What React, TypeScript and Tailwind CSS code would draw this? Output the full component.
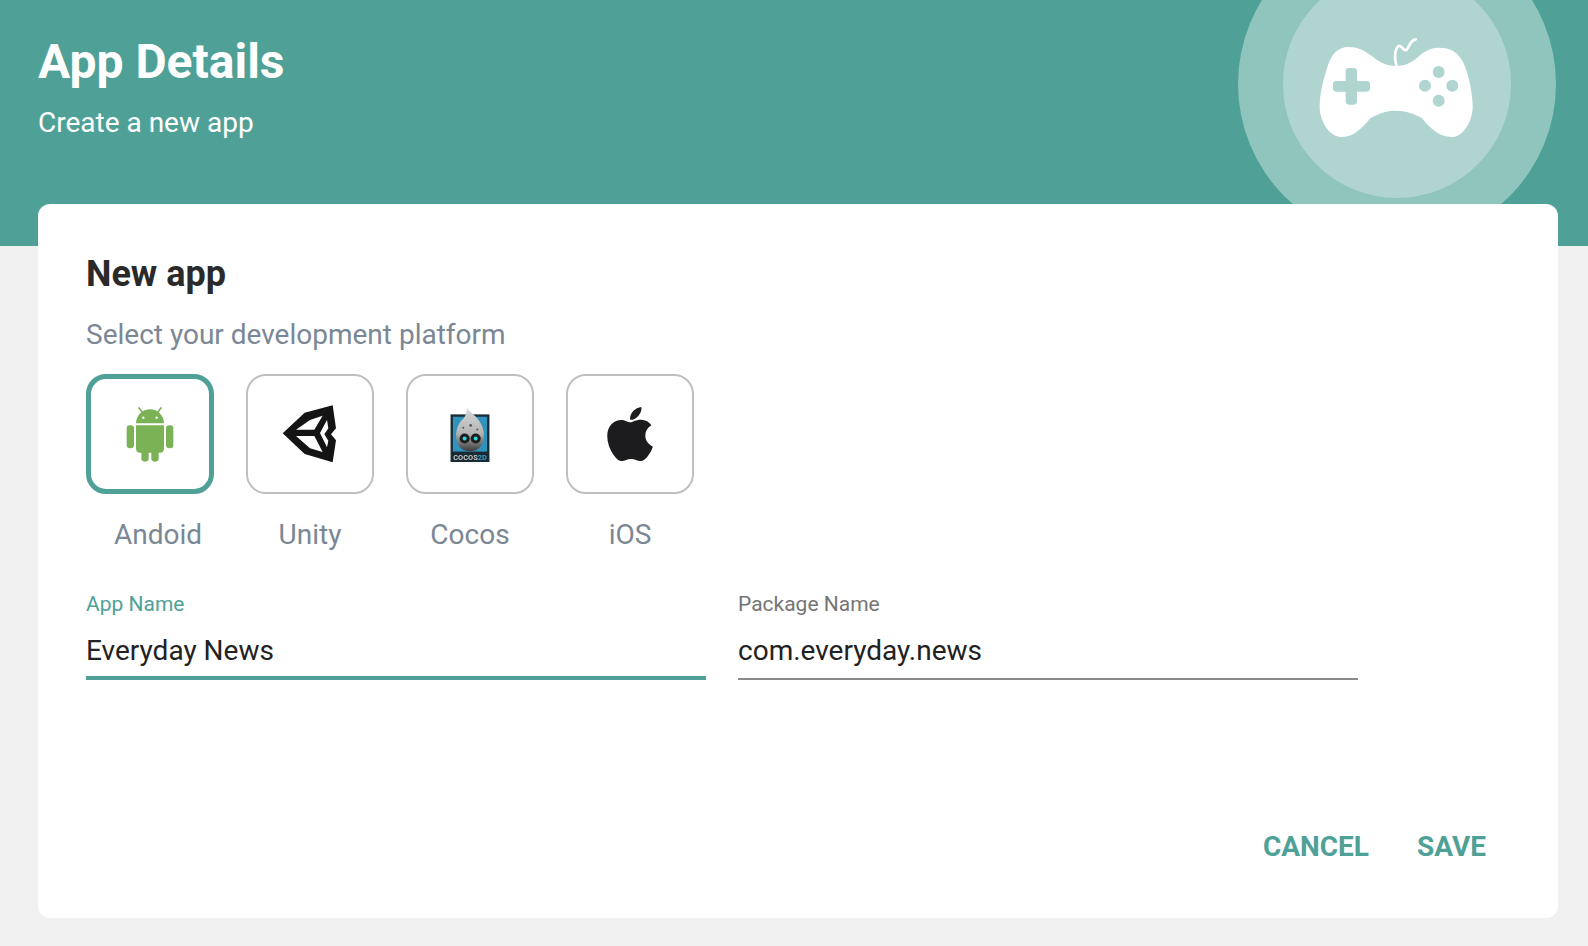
import React from 'react';
import { FaApple } from 'react-icons/fa';

const GamepadIcon: React.FC = () => (
  <svg width={159} height={104} viewBox="290 105 477 312">
    <path
      fill="#fff"
      d="M515 197C490 195 470 180 450 165C430 150 410 141 385 141C350 141 335 165 325 190C310 235 298 280 298 320C298 360 325 411 365 411C400 411 425 385 450 355C480 337 505 332 527 332C555 332 585 342 605 355C630 385 655 411 695 411C730 411 757 360 757 320C757 280 745 225 730 190C715 160 695 143 655 143C625 143 605 160 585 178C570 190 555 195 540 197Z"
    />
    <path
      fill="none"
      stroke="#fff"
      strokeWidth={8}
      strokeLinecap="round"
      d="M528 195C520 170 525 145 535 138C545 135 550 155 558 150C570 135 570 120 586 118"
    />
    <g fill="#b0d5d1">
      <rect x={338} y={243} width={111} height={32} rx={10} />
      <rect x={376} y={204} width={34} height={110} rx={10} />
      <circle cx={655} cy={216} r={18} />
      <circle cx={614} cy={257} r={18} />
      <circle cx={696} cy={257} r={18} />
      <circle cx={655} cy={302} r={18} />
    </g>
  </svg>
);

const AndroidIcon: React.FC = () => (
  <svg width={48} height={56} viewBox="168 140 144 168" className="blur-[0.4px]">
    <g fill="#7cb256">
      <path d="M198 192C198 168 218 150 240 150C262 150 282 168 282 192Z" />
      <path d="M198 198H282V268C282 275 277 280 270 280H210C203 280 198 275 198 268Z" />
      <rect x={170} y={198} width={22} height={69} rx={10} />
      <rect x={288} y={198} width={22} height={69} rx={10} />
      <rect x={214} y={250} width={22} height={57} rx={10} />
      <rect x={244} y={250} width={22} height={57} rx={10} />
    </g>
    <path d="M219 162L207 146M261 162L273 146" stroke="#7cb256" strokeWidth={5} strokeLinecap="round" />
    <circle cx={220} cy={175} r={3.5} fill="#fff" />
    <circle cx={260} cy={175} r={3.5} fill="#fff" />
  </svg>
);

const UnityIcon: React.FC = () => (
  <svg width={80} height={80} viewBox="0 0 240 240" className="blur-[0.5px]">
    <path
      fill="#141414"
      d="M38 118L104 56L188 34L198 103L183 121L198 139L188 205L104 180Z"
    />
    <g fill="#fff">
      <path d="M78 107L120 78L158 65L133 107Z" />
      <path d="M78 126H133L158 174L120 163Z" />
      <path d="M150 117L171 78L175 103L163 121L175 140L171 160Z" />
    </g>
  </svg>
);

const CocosIcon: React.FC = () => (
  <svg width={42} height={57} viewBox="60 30 120 170" className="blur-[0.5px]">
    <defs>
      <linearGradient id="cocos-drop" x1="0" y1="0" x2="0" y2="1">
        <stop offset="0" stopColor="#d8d8d8" />
        <stop offset="0.6" stopColor="#b4b4b4" />
        <stop offset="1" stopColor="#3c3c3c" />
      </linearGradient>
    </defs>
    <rect x={62} y={55} width={116} height={142} fill="#1a2a33" />
    <rect x={69} y={62} width={102} height={104} fill="#2f93bd" />
    <path
      d="M113 35C116 48 128 50 140 65C158 85 165 110 160 130C155 155 140 165 120 165C100 165 85 155 80 130C75 105 85 80 100 68C108 60 108 48 113 35Z"
      fill="url(#cocos-drop)"
    />
    <circle cx={104} cy={127} r={15} fill="#1e1e1e" />
    <circle cx={137} cy={127} r={15} fill="#1e1e1e" />
    <circle cx={104} cy={127} r={6} fill="#35d5e0" />
    <circle cx={137} cy={127} r={6} fill="#35d5e0" />
    <circle cx={122} cy={88} r={4} fill="#555" />
    <circle cx={100} cy={95} r={3} fill="#555" />
    <circle cx={142} cy={100} r={3} fill="#555" />
    <text x={70} y={190} fontSize={24} fontFamily="Roboto, sans-serif" fontWeight={700} fill="#c9c9c9" textLength={100} lengthAdjust="spacingAndGlyphs">
      COCOS<tspan fill="#3aa3c8">2D</tspan>
    </text>
  </svg>
);

const platforms = [
  { label: 'Andoid', icon: <AndroidIcon />, selected: true },
  { label: 'Unity', icon: <UnityIcon />, selected: false },
  { label: 'Cocos', icon: <CocosIcon />, selected: false },
  { label: 'iOS', icon: <FaApple size={62} color="#1c1c1e" className="blur-[0.4px]" />, selected: false }
];

const App: React.FC = () => {
  return (
    <div className="min-h-[946px] bg-[#f0f0f0] font-['Roboto',sans-serif]">
      <header className="relative h-[246px] overflow-hidden bg-[#4fa198] pl-[38px] pt-[30px] text-white">
        <h1 className="text-[48px] leading-[64px] font-bold">App Details</h1>
        <p className="mt-[11px] text-[28px] leading-[36px]">Create a new app</p>
        <div className="absolute left-[1238px] top-[-75px] flex h-[318px] w-[318px] items-center justify-center rounded-full bg-[#90c5bd]">
          <div className="flex h-[228px] w-[228px] items-center justify-center rounded-full bg-[#b0d5d1]">
            <div className="ml-[-1px] mt-[5px] flex">
              <GamepadIcon />
            </div>
          </div>
        </div>
      </header>

      <main className="relative z-10 mx-[30px] ml-[38px] -mt-[42px] flex h-[714px] flex-col rounded-[12px] bg-white pl-[48px] pr-[72px]">
        <h2 className="mt-[48px] text-[36px] leading-[44px] font-bold text-[#2a2a2a]">New app</h2>
        <p className="mt-[21px] text-[28px] leading-[36px] text-[#7b8794]">Select your development platform</p>

        <div className="mt-[21px] flex gap-8">
          {platforms.map((p, i) => (
            <div key={p.label} className="w-[128px]">
              <div
                className={
                  p.selected
                    ? 'flex h-[120px] items-center justify-center rounded-[20px] border-[5px] border-[#4fa198]'
                    : 'flex h-[120px] items-center justify-center rounded-[20px] border-2 border-[#c0c0c0]'
                }
              >
                {p.icon}
              </div>
              <div className={i === 0 ? 'mt-[23px] whitespace-nowrap pl-4 text-center text-[28px] leading-[36px] text-[#7b8794]' : 'mt-[23px] text-center text-[28px] leading-[36px] text-[#7b8794]'}>
                {p.label}
              </div>
            </div>
          ))}
        </div>

        <div className="mt-[37px] flex gap-8">
          <div className="w-[620px]">
            <label className="block text-[21px] leading-[28px] text-[#4fa198]">App Name</label>
            <div className="mt-[15px] h-[47px] border-b-4 border-[#4fa198] text-[28px] leading-[36px] text-[#222]">Everyday News</div>
          </div>
          <div className="w-[620px]">
            <label className="block text-[21px] leading-[28px] text-[#757575]">Package Name</label>
            <div className="mt-[15px] h-[47px] border-b-2 border-[#8a8a8a] text-[28px] leading-[36px] text-[#222]">com.everyday.news</div>
          </div>
        </div>

        <div className="mt-auto mb-[53px] flex justify-end gap-12 text-[28px] leading-[36px] font-bold text-[#4fa198]">
          <span>CANCEL</span>
          <span>SAVE</span>
        </div>
      </main>
    </div>
  );
};

export default App;
